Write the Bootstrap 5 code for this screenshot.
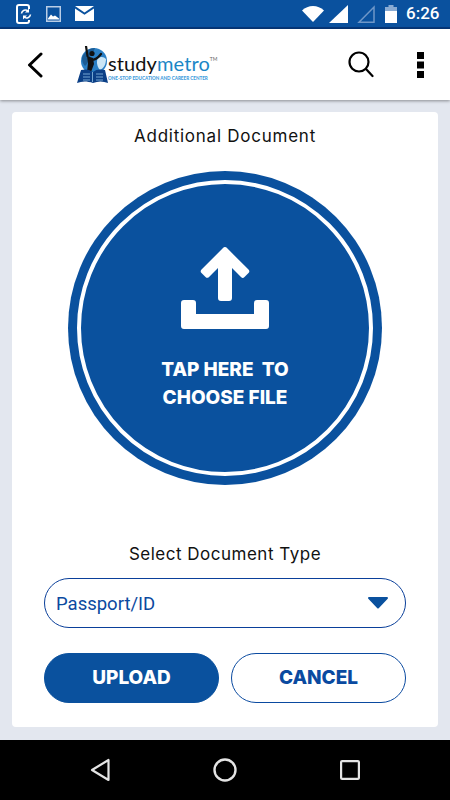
<!DOCTYPE html>
<html lang="en">
<head>
    <meta charset="UTF-8">
    <meta name="viewport" content="width=device-width, initial-scale=1.0">
    <title>Additional Document</title>
    <link href="https://cdn.jsdelivr.net/npm/bootstrap@5.3.0/dist/css/bootstrap.min.css" rel="stylesheet">
    <style>
        html, body { height: 100%; }
        body { background: #e3e7ef; font-family: "Inter", "Liberation Sans", sans-serif; overflow: hidden; }
        .phone { width: 450px; height: 800px; }
        .status-bar { height: 29px; background: #0a519e; border-bottom: 2px solid #06377a; color: #fff; }
        .status-time { font-family: Roboto, sans-serif; font-weight: 500; font-size: 17px; width: 44px; margin-left: 9px; }
        .app-header { height: 71px; background: #fff; box-shadow: 0 1px 3px rgba(0,0,0,.4); z-index: 2; position: relative; }
        .logo-text { font-family: Lato, sans-serif; line-height: 1; }
        .logo-name { font-size: 20px; letter-spacing: .1px; color: #111; }
        .logo-name span { color: #1b86c6; }
        .logo-name sup { font-size: 5px; color: #666; top: -10px; letter-spacing: 0; }
        .logo-tag { font-size: 4.6px; font-weight: 900; color: #3f9ddd; white-space: nowrap; margin-top: 3px; }
        .page-body { height: 640px; padding: 12px 12px 13px; }
        .doc-card { height: 615px; background: #fff; border-radius: 4px; padding: 0 32px; color: #111; }
        .doc-title { font-size: 17px; line-height: 24px; letter-spacing: .75px; margin: 0; text-align: center; }
        .type-title { letter-spacing: .5px; }
        .upload-ring { width: 314px; height: 314px; padding: 9px; background: #0a519e; border: 0; color: #fff; }
        .upload-ring-inner { border: 4px solid #fff; width: 100%; height: 100%; padding-top: 63px; }
        .upload-label { font-weight: 800; font-size: 19px; line-height: 28px; letter-spacing: 0; white-space: pre; margin-top: 27px; }
        .type-select { height: 50px; border: 1.5px solid #0a3f9a; border-radius: 25px; color: #0b4aa0; font-family: Roboto, sans-serif; font-size: 18.5px; padding: 0 17px 0 11px; }
        .type-value { padding-top: 3px; }
        .action-btn { height: 50px; width: 175px; border-radius: 25px; font-weight: 800; font-size: 19px; letter-spacing: 0; padding: 0; }
        .action-primary { background: #0a519e; border: 1px solid #0a519e; color: #fff; }
        .action-outline { background: #fff; border: 1.5px solid #0a4aa0; color: #0a4aa0; }
        .bottom-nav { height: 60px; background: #000; }
    </style>
</head>
<body>
    <div class="phone d-flex flex-column">
        <!-- status bar -->
        <div class="status-bar d-flex align-items-center flex-shrink-0">
            <div class="d-flex align-items-center ps-3" style="gap:14px">
                <svg width="16" height="20" viewBox="0 0 16 20" fill="none" stroke="#fff" stroke-width="2">
                    <path d="M13 5V3a2 2 0 0 0-2-2H3a2 2 0 0 0-2 2v14a2 2 0 0 0 2 2h8a2 2 0 0 0 2-2v-1"/>
                    <path d="M5.500 9.500a4 4 0 0 1 6.500-2.500M14.500 10.500a4 4 0 0 1-6.500 2.500" stroke-width="1.600"/>
                    <path d="M13 4.500v4h-4zM7 15.500v-4h4z" fill="#fff" stroke="none"/>
                </svg>
                <svg width="15" height="16" viewBox="0 0 15 16">
                    <rect x=".75" y=".75" width="13.500" height="14.500" fill="none" stroke="#b9cde6" stroke-width="1.500"/>
                    <path d="M2 12.500l3-4 2 2 2-1 4 3v1H2z" fill="#fff"/>
                </svg>
                <svg width="19" height="15" viewBox="0 0 19 15">
                    <path d="M0 0h19L9.500 6.500z" fill="#fff"/>
                    <path d="M0 2.500l9.500 6.300L19 2.500V15H0z" fill="#fff"/>
                </svg>
            </div>
            <div class="d-flex align-items-center ms-auto">
                <svg width="22" height="16" viewBox="0 0 22 16"><path d="M0 4.500C6-1.500 16-1.500 22 4.500L11 16z" fill="#fff"/></svg>
                <svg width="19" height="18" viewBox="0 0 19 18" style="margin-left:5px"><path d="M19 0v18H0z" fill="#fff"/></svg>
                <svg width="18" height="18" viewBox="0 0 18 18" style="margin-left:9px"><path d="M17 2v15.200H2z" fill="none" stroke="#6f97c8" stroke-width="1.500"/></svg>
                <svg width="12" height="18" viewBox="0 0 12 18" style="margin-left:10px"><path d="M3.500 0h5v2H12v4H0V2h3.500z" fill="#89abd3"/><path d="M0 6h12v12H0z" fill="#fff"/></svg>
                <div class="status-time">6:26</div>
            </div>
        </div>

        <!-- app header -->
        <div class="app-header d-flex align-items-center flex-shrink-0">
            <svg width="16" height="26" viewBox="0 0 16 26" fill="none" stroke="#000" stroke-width="3" stroke-linecap="round" stroke-linejoin="round" style="margin-left:27px">
                <path d="M14 2L2.500 13 14 24"/>
            </svg>
            <div class="d-flex" style="margin-left:33px">
                <svg width="33" height="38" viewBox="0 0 33 38">
                    <circle cx="18" cy="15" r="13" fill="#2a7fc4"/>
                    <path d="M6 12c2-6 7-10 13-10-1 4-4 5-5 9-1 5-4 8-5 9-2-2-3-5-3-8z" fill="#1c5c94"/>
                    <path d="M22 12c4-2 6-1 8 1 0 5-2 9-6 11-3-3-4-9-2-12z" fill="#cbe6f6"/>
                    <path d="M10 0l1.500 10M25 8c-3 4-7 6-10 6" fill="none" stroke="#111" stroke-width="2.200" stroke-linecap="round"/>
                    <circle cx="16" cy="7.500" r="2.600" fill="#111"/>
                    <path d="M11 10l6 2 1 6-3 8-4 0 1-9z" fill="#111"/>
                    <path d="M1 37l4-13c4-1 8-1 12 2 3-3 8-3 12-2l3 13c-5-2-10-2-15 0-6-2-11-2-16 0z" fill="#0b3f86"/>
                    <path d="M7 28h7M7 31h7M7 34h7M20 28h7M20 31h7M20 34h7M16.500 26v10" stroke="#8fc0e6" stroke-width=".8"/>
                </svg>
                <div class="logo-text" style="margin-top:7px; margin-left:-1px">
                    <div class="logo-name">study<span>metro</span><sup>TM</sup></div>
                    <div class="logo-tag">ONE-STOP EDUCATION AND CAREER CENTER</div>
                </div>
            </div>
            <svg width="26" height="28" viewBox="0 0 26 28" fill="none" stroke="#000" stroke-width="2.200" stroke-linecap="round" class="ms-auto">
                <circle cx="11" cy="11" r="9.500"/>
                <path d="M18 18l6.500 7"/>
            </svg>
            <svg width="7" height="26" viewBox="0 0 7 26" fill="#000" style="margin:0 26px 0 43px"><path d="M0 0h7v7H0zM0 9.500h7v7H0zM0 19h7v7H0z"/></svg>
        </div>

        <!-- content -->
        <div class="page-body flex-shrink-0">
            <div class="doc-card d-flex flex-column align-items-stretch">
                <h1 class="doc-title fw-normal" style="margin-top:12px">Additional Document</h1>
                <button class="upload-ring rounded-circle align-self-center" style="margin-top:23px" type="button">
                    <span class="upload-ring-inner rounded-circle d-flex flex-column align-items-center">
                        <svg width="88" height="82" viewBox="0 0 88 82" fill="#fff" class="flex-shrink-0">
                            <path d="M44 0a2 2 0 0 1 1.500.6l22 22a2.500 2.500 0 0 1 0 3.500l-4 4a2.500 2.500 0 0 1-3.500 0l-9-9v30a3 3 0 0 1-3 3h-8a3 3 0 0 1-3-3V21l-9 9a2.500 2.500 0 0 1-3.500 0l-4-4a2.500 2.500 0 0 1 0-3.500l22-22A2 2 0 0 1 44 0z"/>
                            <path d="M3 53h9a3 3 0 0 1 3 3v11h58V56a3 3 0 0 1 3-3h9a3 3 0 0 1 3 3v23a3 3 0 0 1-3 3H3a3 3 0 0 1-3-3V56a3 3 0 0 1 3-3z"/>
                        </svg>
                        <span class="upload-label">TAP HERE  TO
CHOOSE FILE</span>
                    </span>
                </button>
                <h2 class="doc-title type-title fw-normal" style="margin-top:57px">Select Document Type</h2>
                <div class="type-select d-flex align-items-center justify-content-between" style="margin-top:12px">
                    <span class="type-value">Passport/ID</span>
                    <svg width="20" height="12" viewBox="0 0 20 12" fill="#0a519e"><path d="M1 0h18a1 1 0 0 1 .7 1.700l-9 9.500a1 1 0 0 1-1.400 0l-9-9.500A1 1 0 0 1 1 0z"/></svg>
                </div>
                <div class="d-flex justify-content-between" style="margin-top:25px">
                    <button class="btn action-btn action-primary" type="button">UPLOAD</button>
                    <button class="btn action-btn action-outline" type="button">CANCEL</button>
                </div>
            </div>
        </div>

        <!-- android nav -->
        <div class="bottom-nav d-flex align-items-center justify-content-between flex-shrink-0" style="padding:0 90px">
            <svg width="20" height="24" viewBox="0 0 20 24" fill="none" stroke="#e4e4e4" stroke-width="2.200" stroke-linejoin="round"><path d="M18.500 2v20L2 12z"/></svg>
            <svg width="24" height="24" viewBox="0 0 24 24" fill="none" stroke="#e4e4e4" stroke-width="2.400"><circle cx="12" cy="12" r="10.500"/></svg>
            <svg width="20" height="20" viewBox="0 0 20 20" fill="none" stroke="#e4e4e4" stroke-width="2.200"><rect x="1.100" y="1.100" width="17.800" height="17.800" rx="1"/></svg>
        </div>
    </div>
    <script src="https://cdn.jsdelivr.net/npm/bootstrap@5.3.0/dist/js/bootstrap.bundle.min.js"></script>
</body>
</html>
